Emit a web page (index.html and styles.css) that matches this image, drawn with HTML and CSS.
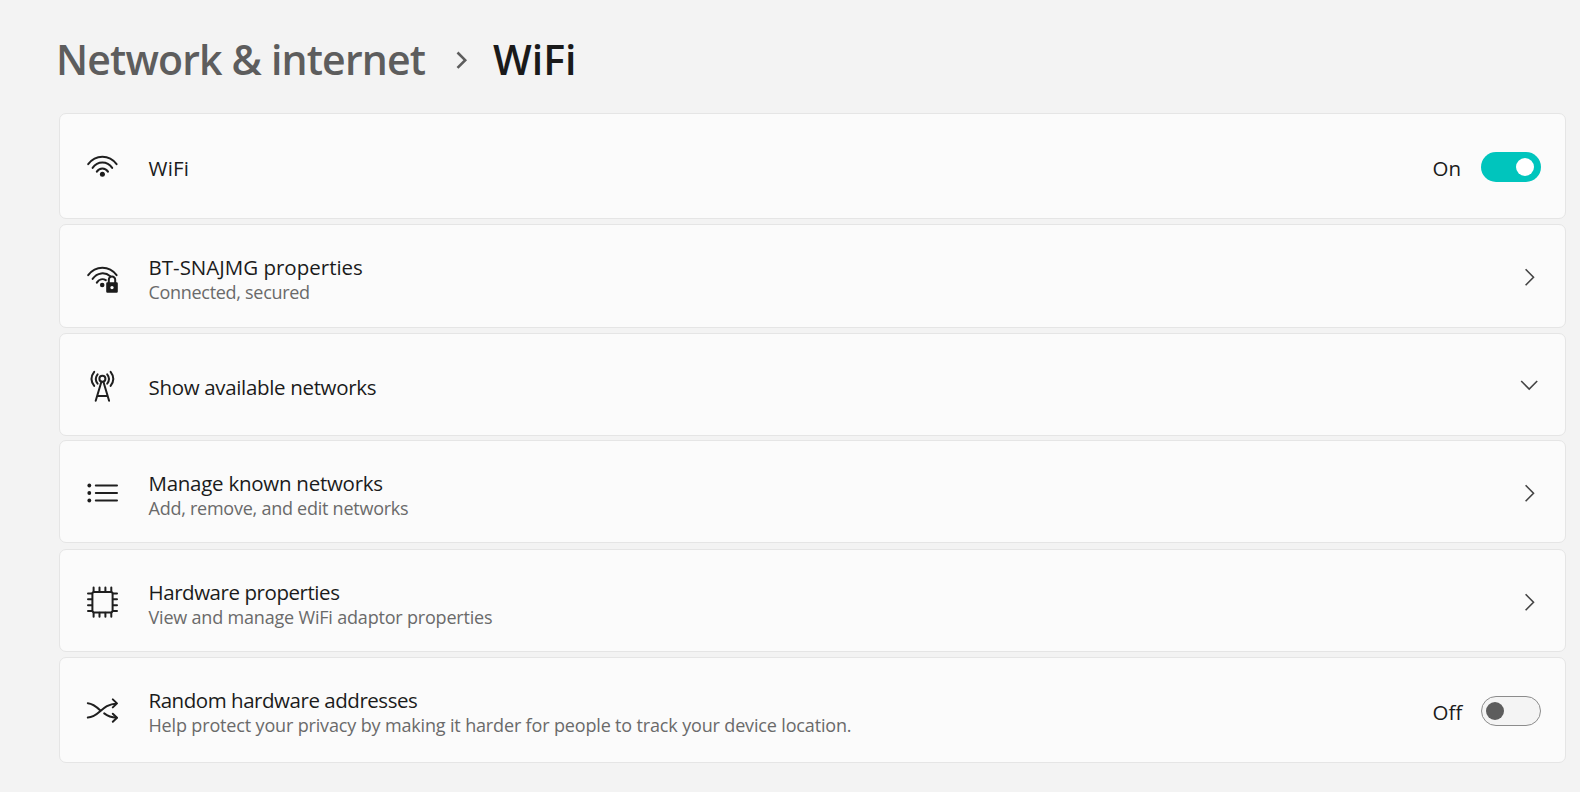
FILE: index.html
```
<!DOCTYPE html>
<html lang="en">
<head>
<meta charset="utf-8">
<title>Network &amp; internet - WiFi</title>
<link rel="stylesheet" href="styles.css">
</head>
<body>
<main class="page">
  <header class="breadcrumb">
    <span class="crumb crumb-parent">Network &amp; internet</span>
    <svg class="crumb-sep" width="12" height="20" viewBox="0 0 12 20"><path d="M1.5 2.5 9.2 10.2 1.5 17.9"/></svg>
    <h1 class="crumb crumb-current">WiFi</h1>
  </header>

  <section class="cards">
    <div class="card wifi">
      <svg class="icon" viewBox="0 0 32 32">
        <path d="M2.2 14.2C9.6 4.3 23.2 4.3 30.6 14.2M6.6 17.9C11.6 10.6 21.2 10.6 26.2 17.9M10.8 21.6C13.6 17.3 19.2 17.3 22 21.6"/>
        <circle class="fill" cx="16.4" cy="24.3" r="2.5"/>
      </svg>
      <div class="text"><div class="title">WiFi</div></div>
      <div class="state">On</div>
      <div class="toggle on"><span class="knob"></span></div>
    </div>

    <div class="card props">
      <svg class="icon" viewBox="0 0 32 32">
        <path d="M2.2 15.2C9.6 5.3 23.2 5.3 30.6 15.2M6.6 18.9C11.1 12.4 19 11.6 24.3 16.2M10.8 22.6C13 19.2 16.8 18.4 19.8 20.2"/>
        <circle class="fill" cx="16.2" cy="25" r="2.3"/>
        <path class="shackle" d="M22.8 23v-3.2a3.2 3.2 0 0 1 6.4 0V23"/>
        <path class="fill" fill-rule="evenodd" d="M21.4 22.2h9.2a1.2 1.2 0 0 1 1.2 1.2v8.2a1.2 1.2 0 0 1-1.2 1.2h-9.2a1.2 1.2 0 0 1-1.2-1.2v-8.2a1.2 1.2 0 0 1 1.2-1.2zM26 25.9a1.7 1.7 0 1 0 0 3.4 1.7 1.7 0 0 0 0-3.4z"/>
      </svg>
      <div class="text"><div class="title">BT-SNAJMG properties</div><div class="sub">Connected, secured</div></div>
      <svg class="chevron" viewBox="0 0 20 20"><path d="M6.6 2.2 14.5 10.2 6.6 18.2"/></svg>
    </div>

    <div class="card available">
      <svg class="icon" viewBox="0 0 32 32">
        <circle cx="16.4" cy="9.8" r="3"/>
        <path d="M15.4 12.8 9.7 31.8M17.4 12.8 23.1 31.8M11.4 27h10M11.6 5.4C9.4 8.2 9.4 11.8 11.6 14.6M21.2 5.4C23.4 8.2 23.4 11.8 21.2 14.6M8.2 2.9C4.8 7.3 4.8 12.5 8.2 16.9M24.6 2.9C28 7.3 28 12.5 24.6 16.9"/>
      </svg>
      <div class="text"><div class="title">Show available networks</div></div>
      <svg class="chevron" viewBox="0 0 20 20"><path d="M2.2 5 10.2 13 18.2 5"/></svg>
    </div>

    <div class="card known">
      <svg class="icon" viewBox="0 0 32 32">
        <path d="M9.8 9.5h21.2M9.8 17h21.2M9.8 24.5h21.2"/>
        <g class="fill"><circle cx="3.3" cy="9.5" r="1.9"/><circle cx="3.3" cy="17" r="1.9"/><circle cx="3.3" cy="24.5" r="1.9"/></g>
      </svg>
      <div class="text"><div class="title">Manage known networks</div><div class="sub">Add, remove, and edit networks</div></div>
      <svg class="chevron" viewBox="0 0 20 20"><path d="M6.6 2.2 14.5 10.2 6.6 18.2"/></svg>
    </div>

    <div class="card hardware">
      <svg class="icon" viewBox="0 0 32 32">
        <rect x="6.4" y="7" width="20.2" height="20.4" rx="1.8"/>
        <path d="M7.6 6.6V2.6M13.5 6.6V2.6M19.4 6.6V2.6M25.3 6.6V2.6M7.6 27.8v4M13.5 27.8v4M19.4 27.8v4M25.3 27.8v4M6 8.4H2M6 14.3H2M6 20.2H2M6 26.1H2M27 8.4h4M27 14.3h4M27 20.2h4M27 26.1h4"/>
      </svg>
      <div class="text"><div class="title">Hardware properties</div><div class="sub">View and manage WiFi adaptor properties</div></div>
      <svg class="chevron" viewBox="0 0 20 20"><path d="M6.6 2.2 14.5 10.2 6.6 18.2"/></svg>
    </div>

    <div class="card random">
      <svg class="icon" viewBox="0 0 32 32">
        <path d="M1.8 9.2C7 9.6 10.6 12.8 14.4 16.4M18.2 19.4C21.6 22 25 23.4 30.6 23.8"/>
        <path d="M1.8 23.6C13.6 23.2 15.2 10.4 30.8 9.4M26.8 5.4 31 9.4 26.8 13.4M26.8 19.8 31 23.8 26.8 27.8"/>
      </svg>
      <div class="text"><div class="title">Random hardware addresses</div><div class="sub">Help protect your privacy by making it harder for people to track your device location.</div></div>
      <div class="state">Off</div>
      <div class="toggle off"><span class="knob"></span></div>
    </div>
  </section>
</main>
</body>
</html>
```
FILE: styles.css
```
* { box-sizing: border-box; }

body {
  margin: 0;
  background: #f3f3f3;
  color: #1b1b1b;
  font-family: "Open Sans", "Noto Sans", sans-serif;
}

.page {
  height: 792px;
  overflow: hidden;
  padding: 30px 14px 0 59px;
}

.breadcrumb {
  display: flex;
  align-items: center;
  height: 58px;
  margin: 0 0 25px -3px;
}

.crumb {
  margin: 0;
  font-size: 41px;
  font-weight: 550;
  line-height: 58px;
  white-space: nowrap;
}

.crumb-parent {
  width: 400px;
  color: #5d5d5d;
  letter-spacing: -0.83px;
}

.crumb-sep {
  margin-top: 2px;
  fill: none;
  stroke: #5d5d5d;
  stroke-width: 2.6;
}

.crumb-current {
  margin-left: 25px;
  color: #1a1a1a;
}

.card {
  display: flex;
  align-items: center;
  height: 103px;
  margin-bottom: 5px;
  padding: 0 24px 0 26px;
  border: 1px solid #e5e5e5;
  border-radius: 7px;
  background: #fbfbfb;
}

.wifi { height: 106px; }
.props { height: 104px; }
.available { margin-bottom: 4px; }
.known { margin-bottom: 6px; }
.random { height: 106px; }

.icon {
  flex: none;
  width: 32px;
  height: 32px;
  overflow: visible;
  fill: none;
  stroke: #1f1f1f;
  stroke-width: 2;
  stroke-linecap: round;
  stroke-linejoin: round;
}

.icon .fill { fill: #1b1b1b; stroke: none; }

.text {
  flex: 1;
  margin-left: 30.5px;
  padding-top: 4px;
  white-space: nowrap;
}

.title {
  font-size: 20.5px;
  line-height: 28px;
}

.sub {
  color: #6a6a6a;
  font-size: 18px;
  line-height: 22px;
}

.wifi .title { letter-spacing: 0.2px; }
.available .text { padding-top: 5px; }
.available .title { letter-spacing: -0.33px; }
.known .title { letter-spacing: -0.26px; }
.hardware .title { letter-spacing: -0.44px; }
.random .title { letter-spacing: -0.46px; }
.random .text { padding-top: 2px; }

.props .sub { letter-spacing: -0.3px; }
.known .sub { letter-spacing: -0.25px; }
.hardware .sub { letter-spacing: -0.19px; }
.random .sub { letter-spacing: -0.155px; }

.state {
  width: 48.5px;
  padding-top: 3px;
  font-size: 20.5px;
  line-height: 28px;
}

.toggle {
  display: flex;
  align-items: center;
  width: 60px;
  height: 30px;
  margin-top: 2px;
  border-radius: 15px;
}

.on {
  justify-content: flex-end;
  padding-right: 7px;
  background: #00c5bd;
}

.off {
  padding-left: 4px;
  border: 1.5px solid #8c8c8c;
  background: #f4f4f4;
}

.knob {
  width: 18px;
  height: 18px;
  border-radius: 50%;
  background: #fff;
}

.off .knob { background: #5d5d5d; }

.chevron {
  flex: none;
  width: 20px;
  height: 20px;
  margin: 2px 2px 0 0;
  fill: none;
  stroke: #444;
  stroke-width: 1.6;
}
```
